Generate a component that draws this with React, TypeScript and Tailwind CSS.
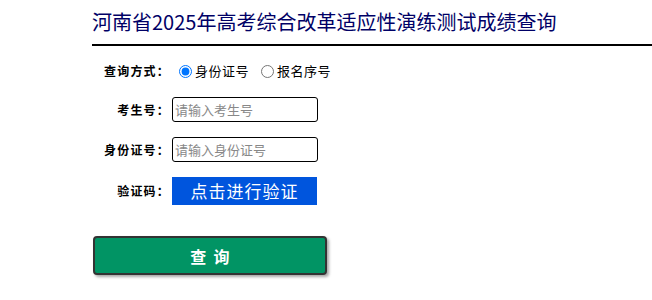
export default function App() {
  const font = { fontFamily: '"Microsoft YaHei", "Noto Sans CJK SC", sans-serif' };
  return (
    <div className="w-[652px] h-[300px] bg-white overflow-hidden" style={font}>
      <div className="pl-[92px] pt-[8px]">
        <h1 className="text-[20px] leading-[28px] text-[#000066] font-normal">
          河南省2025年高考综合改革适应性演练测试成绩查询
        </h1>
        <div className="mt-[8px] h-[2px] bg-black" />

        <div className="flex items-center mt-[15px] h-[20px]">
          <div className="w-[78px] text-right text-[12px] font-bold tracking-[1.2px] text-black">查询方式：</div>
          <label className="flex items-center ml-[9px] text-[13px] tracking-[0.5px] text-black">
            <input type="radio" name="way" defaultChecked className="w-[13px] h-[13px] m-0 mr-[3px] accent-[#0075ff]" />
            身份证号
          </label>
          <label className="flex items-center ml-[12px] text-[13px] tracking-[0.5px] text-black">
            <input type="radio" name="way" className="w-[13px] h-[13px] m-0 mr-[3px]" />
            报名序号
          </label>
        </div>

        <div className="flex items-center mt-[16px]">
          <div className="w-[78px] text-right text-[12px] font-bold tracking-[1.2px] text-black">考生号：</div>
          <input
            placeholder="请输入考生号"
            className="ml-[2px] w-[146px] h-[25px] border border-black rounded-[3px] px-[2px] text-[13px] placeholder:text-[#888] outline-none"
          />
        </div>

        <div className="flex items-center mt-[15px]">
          <div className="w-[78px] text-right text-[12px] font-bold tracking-[1.2px] text-black">身份证号：</div>
          <input
            placeholder="请输入身份证号"
            className="ml-[2px] w-[146px] h-[25px] border border-black rounded-[3px] px-[2px] text-[13px] placeholder:text-[#888] outline-none"
          />
        </div>

        <div className="flex items-center mt-[15px]">
          <div className="w-[78px] text-right text-[12px] font-bold tracking-[1.2px] text-black">验证码：</div>
          <button className="ml-[2px] w-[145px] h-[28px] bg-[#0055dd] text-white text-[17px] leading-[28px] tracking-[1px]">
            点击进行验证
          </button>
        </div>

        <button className="mt-[31px] ml-[1px] w-[234px] h-[39px] bg-[#019464] border-2 border-[#333] rounded-[4px] text-white text-[16px] font-bold shadow-[2px_2px_3px_rgba(0,0,0,0.35)]">
          查&nbsp;&nbsp;询
        </button>
      </div>
    </div>
  );
}
